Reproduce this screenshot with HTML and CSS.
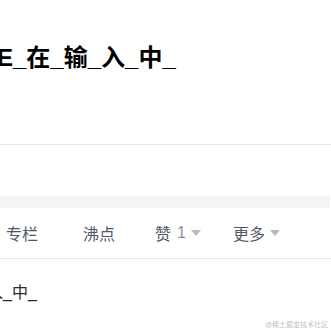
FILE: index.html
```html
<!DOCTYPE html>
<html>
<head>
    <meta charset="utf-8" />
    <title>E_在_输_入_中_</title>
    <link rel="stylesheet" href="styles.css">
</head>
<body>
    <div class="page">
        <header class="head">
            <h1 class="title">E_在_输_入_中_</h1>
        </header>
        <div class="spacer"></div>
        <div class="band"></div>
        <nav class="tabs">
            <span class="tab">专栏</span>
            <span class="tab">沸点</span>
            <span class="tab">赞<span class="count">1</span><i class="caret"></i></span>
            <span class="tab">更多<i class="caret"></i></span>
        </nav>
        <div class="list">
            <p class="item">入_中_</p>
        </div>
        <span class="mark">@稀土掘金技术社区</span>
    </div>
</body>
</html>
```

FILE: styles.css
```css
html, body {
    margin: 0;
    padding: 0;
    background: #fff;
    font-family: "Liberation Sans", "Noto Sans CJK SC", sans-serif;
}
.page {
    position: relative;
    width: 331px;
    height: 331px;
    overflow: hidden;
}
.head {
    padding-top: 42px;
    height: 102px;
    border-bottom: 1px solid #e4e6eb;
}
.title {
    margin: 0 0 0 -3px;
    font-size: 24px;
    line-height: 32px;
    font-weight: 700;
    color: #000;
    white-space: nowrap;
}
.spacer {
    height: 51px;
}
.band {
    height: 12px;
    background: #f4f5f5;
    margin-right: 1px;
}
.tabs {
    display: grid;
    grid-template-columns: 77px 72px 78px auto;
    align-items: center;
    height: 50px;
    padding-left: 6px;
    border-bottom: 1px solid #e4e6eb;
    font-size: 16px;
    color: #515767;
}
.tab {
    display: flex;
    align-items: center;
    white-space: nowrap;
}
.count {
    color: #8a919f;
    margin-left: 6px;
}
.caret {
    display: inline-block;
    margin-left: 5px;
    width: 0;
    height: 0;
    border-left: 5px solid transparent;
    border-right: 5px solid transparent;
    border-top: 6px solid #b2bac2;
}
.list {
    padding-top: 22px;
}
.item {
    margin: 0 0 0 -13px;
    font-size: 16px;
    line-height: 24px;
    color: #252933;
}
.mark {
    position: absolute;
    right: 3px;
    bottom: 2px;
    font-size: 7px;
    color: #c0c4cc;
}
```
